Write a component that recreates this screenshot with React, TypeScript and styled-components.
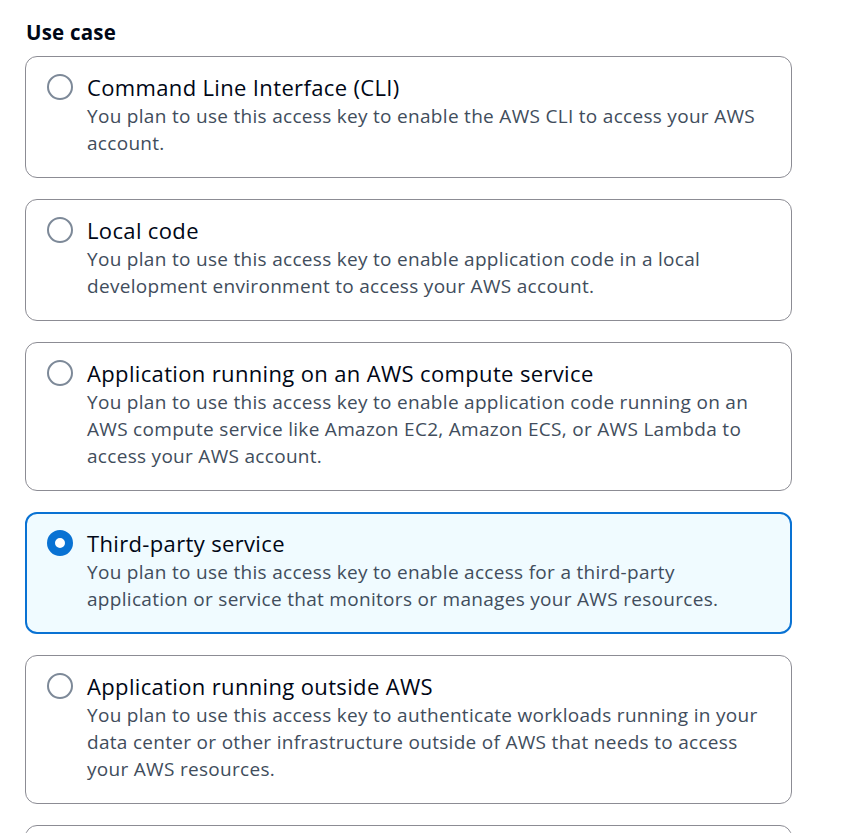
import React, { useState } from 'react';
import styled, { createGlobalStyle } from 'styled-components';

const GlobalStyle = createGlobalStyle`
  html, body {
    margin: 0;
    padding: 0;
    background: #ffffff;
  }
  body {
    font-family: "Open Sans", "Noto Sans", Arial, sans-serif;
    color: #000716;
  }
`;

const options = [
  {
    id: 'cli',
    title: 'Command Line Interface (CLI)',
    description: 'You plan to use this access key to enable the AWS CLI to access your AWS account.',
  },
  {
    id: 'local',
    title: 'Local code',
    description:
      'You plan to use this access key to enable application code in a local development environment to access your AWS account.',
  },
  {
    id: 'compute',
    title: 'Application running on an AWS compute service',
    description:
      'You plan to use this access key to enable application code running on an AWS compute service like Amazon EC2, Amazon ECS, or AWS Lambda to access your AWS account.',
  },
  {
    id: 'third-party',
    title: 'Third-party service',
    description:
      'You plan to use this access key to enable access for a third-party application or service that monitors or manages your AWS resources.',
  },
  {
    id: 'outside',
    title: 'Application running outside AWS',
    description:
      'You plan to use this access key to authenticate workloads running in your data center or other infrastructure outside of AWS that needs to access your AWS resources.',
  },
  {
    id: 'other',
    title: 'Other',
    description: 'Your use case is not listed here.',
  },
];

const Page = styled.div`
  padding: 18px 53px 0 25px;
`;

const Label = styled.div`
  font-size: 20.5px;
  font-weight: 700;
  letter-spacing: 0.2px;
  line-height: 28px;
  padding-left: 1px;
  margin-bottom: 10px;
`;

const List = styled.div`
  display: flex;
  flex-direction: column;
  gap: 21px;
`;

const Card = styled.label<{ $selected: boolean }>`
  display: flex;
  gap: 14px;
  align-items: flex-start;
  padding: ${(p) => (p.$selected ? '14px 20px 19px 20px' : '15px 21px 20px 21px')};
  border: ${(p) => (p.$selected ? '2px solid #0972d3' : '1px solid #8c8c94')};
  background: ${(p) => (p.$selected ? '#f0fbff' : '#ffffff')};
  border-radius: 12px;
  cursor: pointer;
`;

const Radio = styled.span<{ $selected: boolean }>`
  flex: none;
  box-sizing: border-box;
  width: 26px;
  height: 26px;
  margin-top: 2px;
  border-radius: 50%;
  border: ${(p) => (p.$selected ? '8px solid #0972d3' : '2px solid #7d8998')};
  background: #ffffff;
`;

const Text = styled.div`
  display: flex;
  flex-direction: column;
`;

const Title = styled.div`
  font-size: 22px;
  letter-spacing: 0.35px;
  line-height: 30px;
  color: #000716;
`;

const Description = styled.div`
  margin-top: 1px;
  font-size: 19px;
  letter-spacing: 0.3px;
  line-height: 27px;
  color: #414d5c;
`;

export default function App() {
  const [selected, setSelected] = useState('third-party');
  return (
    <Page>
      <GlobalStyle />
      <Label>Use case</Label>
      <List>
        {options.map((o) => (
          <Card key={o.id} $selected={selected === o.id} onClick={() => setSelected(o.id)}>
            <Radio $selected={selected === o.id} />
            <Text>
              <Title>{o.title}</Title>
              <Description>{o.description}</Description>
            </Text>
          </Card>
        ))}
      </List>
    </Page>
  );
}
